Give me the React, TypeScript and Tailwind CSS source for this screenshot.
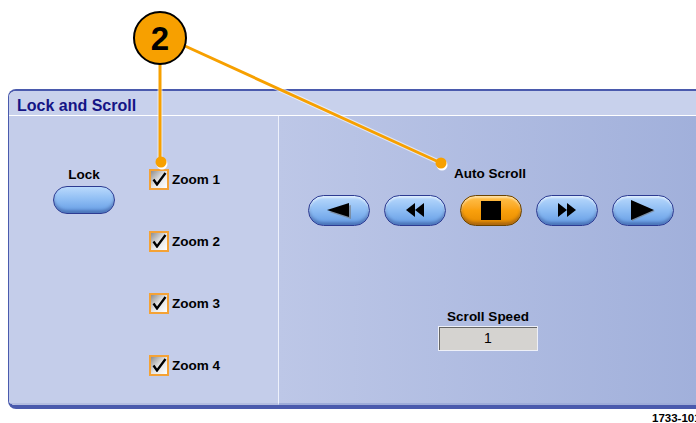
import React from "react";

function Check() {
  return (
    <div className="w-[20px] h-[21px] border-2 border-[#f4a236] bg-gradient-to-br from-[#8f8f8f] via-[#e4e4e4] to-white flex items-center justify-center">
      <svg width="15" height="14" viewBox="0 0 15 14">
        <path d="M1.5 7.5 L5 12.5 L13.5 1" fill="none" stroke="#000" strokeWidth="2.3" strokeLinejoin="miter" />
      </svg>
    </div>
  );
}

function Icon({ kind }: { kind: string }) {
  if (kind === "prev")
    return (
      <svg width="24" height="16" viewBox="0 0 24 16">
        <polygon points="23,1 23,15 1,8" fill="#777" opacity="0.6" transform="translate(1,1)" />
        <polygon points="22,0 22,14 0,7" fill="#000" />
      </svg>
    );
  if (kind === "rew")
    return (
      <svg width="20" height="16" viewBox="0 0 20 16">
        <polygon points="10,0 10,14 1,7" fill="#000" />
        <polygon points="19,0 19,14 10,7" fill="#000" />
      </svg>
    );
  if (kind === "stop")
    return <div className="w-[20px] h-[19px] bg-black" />;
  if (kind === "ff")
    return (
      <svg width="20" height="16" viewBox="0 0 20 16">
        <polygon points="1,0 1,14 10,7" fill="#000" />
        <polygon points="10,0 10,14 19,7" fill="#000" />
      </svg>
    );
  return (
    <svg width="26" height="22" viewBox="0 0 26 22">
      <polygon points="2,1 2,21 25,11" fill="#777" opacity="0.6" />
      <polygon points="1,0 1,20 24,10" fill="#000" />
    </svg>
  );
}

function PillButton({ kind, active }: { kind: string; active?: boolean }) {
  return (
    <div
      className={
        "w-[62px] h-[31px] rounded-full border-[1.5px] flex items-center justify-center shadow-[inset_0_-3px_3px_rgba(0,0,60,0.25),inset_0_2px_2px_rgba(255,255,255,0.5)] " +
        (active
          ? "border-[#6b4300] bg-gradient-to-b from-[#ffc24a] via-[#f9a00c] to-[#e58a00]"
          : "border-[#2d3b92] bg-gradient-to-b from-[#b9d9fc] via-[#8dbcf3] to-[#639be4]")
      }
    >
      <Icon kind={kind} />
    </div>
  );
}

export default function App() {
  const zooms = ["Zoom 1", "Zoom 2", "Zoom 3", "Zoom 4"];

  return (
    <div className="relative w-[696px] h-[423px] bg-white overflow-hidden font-['Liberation_Sans',Arial,sans-serif]">
      <div className="h-[89px]" />

      {/* panel */}
      <div className="ml-[8px] h-[320px] flex flex-col border-t-2 border-b-[4px] border-l border-[#4a5aad] rounded-tl-[8px] rounded-bl-[8px] overflow-hidden">
        <div className="h-[25px] shrink-0 bg-[#c8d1ec] border-b border-white flex items-center pl-[8px] pt-[5px]">
          <span className="text-[16px] font-bold text-[#141485] leading-none">Lock and Scroll</span>
        </div>

        <div className="flex-1 flex">
          {/* left column */}
          <div className="w-[270px] bg-[#c4cdea] border-r border-[#eef1fb] flex pt-[51px] border-b-2 border-b-[#b3bde0]">
            <div className="ml-[44px] w-[62px] flex flex-col items-center">
              <span className="text-[13.5px] font-bold text-black leading-[16px]">Lock</span>
              <div className="mt-[3px] w-[62px] h-[28px] rounded-full border-[1.5px] border-[#2d3b92] bg-gradient-to-b from-[#b9d9fc] via-[#8dbcf3] to-[#639be4] shadow-[inset_0_-3px_3px_rgba(0,0,60,0.25)]" />
            </div>
            <div className="ml-[34px] flex flex-col gap-[40px] pt-[1px]">
              {zooms.map((z) => (
                <div key={z} className="h-[22px] flex items-center gap-[3px]">
                  <Check />
                  <span className="text-[13.5px] font-bold text-black leading-[20px] pt-[2px]">{z}</span>
                </div>
              ))}
            </div>
          </div>

          {/* right column */}
          <div className="flex-1 bg-gradient-to-r from-[#bdc7e7] to-[#a1b0db] flex flex-col pt-[50px] border-b-2 border-b-[#9dabd8]">
            <div className="pl-[175px] text-[13.5px] font-bold text-black leading-[16px]">Auto Scroll</div>
            <div className="mt-[13px] pl-[29px] flex gap-[14px]">
              <PillButton kind="prev" />
              <PillButton kind="rew" />
              <PillButton kind="stop" active />
              <PillButton kind="ff" />
              <PillButton kind="play" />
            </div>
            <div className="mt-[83px] pl-[159px] flex flex-col items-center w-[259px]">
              <span className="text-[13.5px] font-bold text-black leading-[16px]">Scroll Speed</span>
              <div className="mt-[1px] w-[100px] h-[25px] border border-[#eef0f8] bg-[#d5d3d0] shadow-[inset_1px_1px_0_#666] flex items-center justify-center text-[14px] text-black">
                1
              </div>
            </div>
          </div>
        </div>
      </div>

      <div className="pl-[652px] pt-[4px] whitespace-nowrap text-[11.5px] font-bold text-black leading-none">1733-101</div>

      {/* callout overlay */}
      <svg className="absolute inset-0 pointer-events-none" width="696" height="423">
        <line x1="160" y1="60" x2="160" y2="162" stroke="#fff" strokeOpacity="0.6" strokeWidth="5" />
        <line x1="160" y1="60" x2="160" y2="162" stroke="#f7a000" strokeWidth="3" />
        <line x1="185" y1="46" x2="441" y2="163" stroke="#fff" strokeOpacity="0.6" strokeWidth="5" />
        <line x1="185" y1="46" x2="441" y2="163" stroke="#f7a000" strokeWidth="3" />
        <circle cx="162" cy="164" r="5.5" fill="#fff" />
        <circle cx="161" cy="162" r="5.5" fill="#f7a000" />
        <circle cx="442" cy="165" r="5.5" fill="#fff" />
        <circle cx="441" cy="163" r="5.5" fill="#f7a000" />
        <circle cx="160" cy="38" r="26" fill="#f7a000" stroke="#000" strokeWidth="2" />
        <text x="160" y="50" textAnchor="middle" fontFamily="Liberation Sans, Arial, sans-serif" fontWeight="bold" fontSize="33" fill="#000">2</text>
      </svg>
    </div>
  );
}
